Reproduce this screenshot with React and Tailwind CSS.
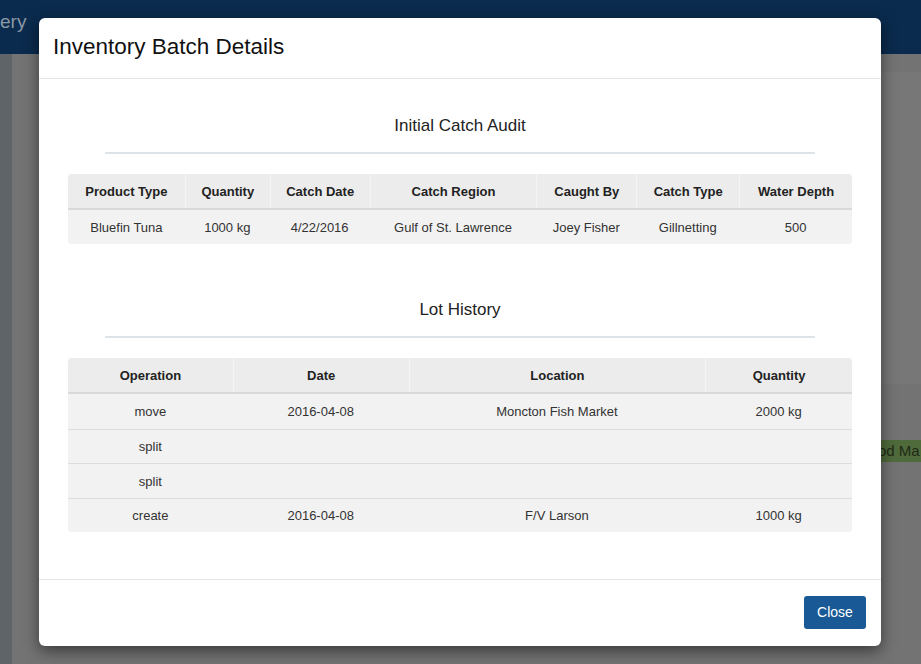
import React from 'react';

const CATCH_COLS = [
  { label: 'Product Type', w: 'w-[117px]' },
  { label: 'Quantity', w: 'w-[85px]' },
  { label: 'Catch Date', w: 'w-[100px]' },
  { label: 'Catch Region', w: 'w-[167px]' },
  { label: 'Caught By', w: 'w-[100px]' },
  { label: 'Catch Type', w: 'w-[103px]' },
  { label: 'Water Depth', w: 'w-[113px]' },
];

const CATCH_ROW = ['Bluefin Tuna', '1000 kg', '4/22/2016', 'Gulf of St. Lawrence', 'Joey Fisher', 'Gillnetting', '500'];

const LOT_COLS = [
  { label: 'Operation', w: 'w-[165px]' },
  { label: 'Date', w: 'w-[176px]' },
  { label: 'Location', w: 'w-[297px]' },
  { label: 'Quantity', w: 'w-[147px]' },
];

const LOT_ROWS = [
  ['move', '2016-04-08', 'Moncton Fish Market', '2000 kg'],
  ['split', '', '', ''],
  ['split', '', '', ''],
  ['create', '2016-04-08', 'F/V Larson', '1000 kg'],
];

function DataTable({ cols, rows }) {
  return (
    <div className="overflow-hidden rounded-[4px] bg-[#f2f2f2] text-[13px]">
      <div className="flex h-[36px] border-b-2 border-[#d9d9d9] bg-[#ececec] font-bold text-[#222]">
        {cols.map((c, i) => (
          <div
            key={c.label}
            className={`${c.w} flex items-center justify-center pt-[1px] ${i > 0 ? 'border-l border-[#f4f4f4]' : ''}`}
          >
            {c.label}
          </div>
        ))}
      </div>
      {rows.map((row, r) => (
        <div
          key={r}
          className={`flex text-[#333] ${r > 0 ? 'border-t border-[#dddddd]' : ''} ${r % 2 === 0 && rows.length > 1 ? 'h-[35px]' : 'h-[34px]'}`}
        >
          {row.map((cell, i) => (
            <div key={i} className={`${cols[i].w} flex items-center justify-center pt-[1px]`}>
              {cell}
            </div>
          ))}
        </div>
      ))}
    </div>
  );
}

function Section({ title, children }) {
  return (
    <div>
      <h3 className="h-[24px] text-center text-[17px] leading-[24px] text-[#222]">{title}</h3>
      <div className="mx-[37px] mt-[14px] mb-[20px] h-[2px] bg-[#dde3e6]" />
      {children}
    </div>
  );
}

export default function App() {
  return (
    <div className="relative h-[664px] w-[921px] overflow-hidden bg-[#737373] font-['Liberation_Sans',Arial,sans-serif]">
      {/* page behind the modal, dimmed */}
      <div className="flex h-[54px] items-center bg-[#0a2b4d] pb-[10px]">
        <span className="text-[19px] text-[#8a97a6]">ery</span>
      </div>
      <div className="flex h-[610px]">
        <div className="w-[12px] bg-[#5f6468]" />
        <div className="flex-1" />
        <div className="flex w-[43px] flex-col">
          <div className="mt-[18px] h-[312px] bg-[#777777]" />
          <div className="mt-[56px] flex h-[22px] items-center bg-[#4f6b3c] text-[15px] text-[#1e2a16]">
            <span>od Ma</span>
          </div>
        </div>
      </div>

      {/* modal */}
      <div className="absolute inset-0 pl-[39px] pt-[18px]">
        <div className="w-[842px] overflow-hidden rounded-[6px] bg-white shadow-[0_5px_15px_rgba(0,0,0,0.5)]">
          <div className="flex h-[61px] items-center border-b border-[#e5e5e5] pl-[14px] pb-[2px]">
            <h2 className="text-[22.5px] text-[#111]">Inventory Batch Details</h2>
          </div>

          <div className="px-[29px] pt-[35px] pb-[47px]">
            <Section title="Initial Catch Audit">
              <DataTable cols={CATCH_COLS} rows={[CATCH_ROW]} />
            </Section>
            <div className="h-[54px]" />
            <Section title="Lot History">
              <DataTable cols={LOT_COLS} rows={LOT_ROWS} />
            </Section>
          </div>

          <div className="flex h-[67px] items-start justify-end border-t border-[#e5e5e5] pt-[16px] pr-[15px]">
            <button className="h-[33px] w-[62px] rounded-[3px] bg-[#195a96] text-[14px] text-white">
              Close
            </button>
          </div>
        </div>
      </div>
    </div>
  );
}
